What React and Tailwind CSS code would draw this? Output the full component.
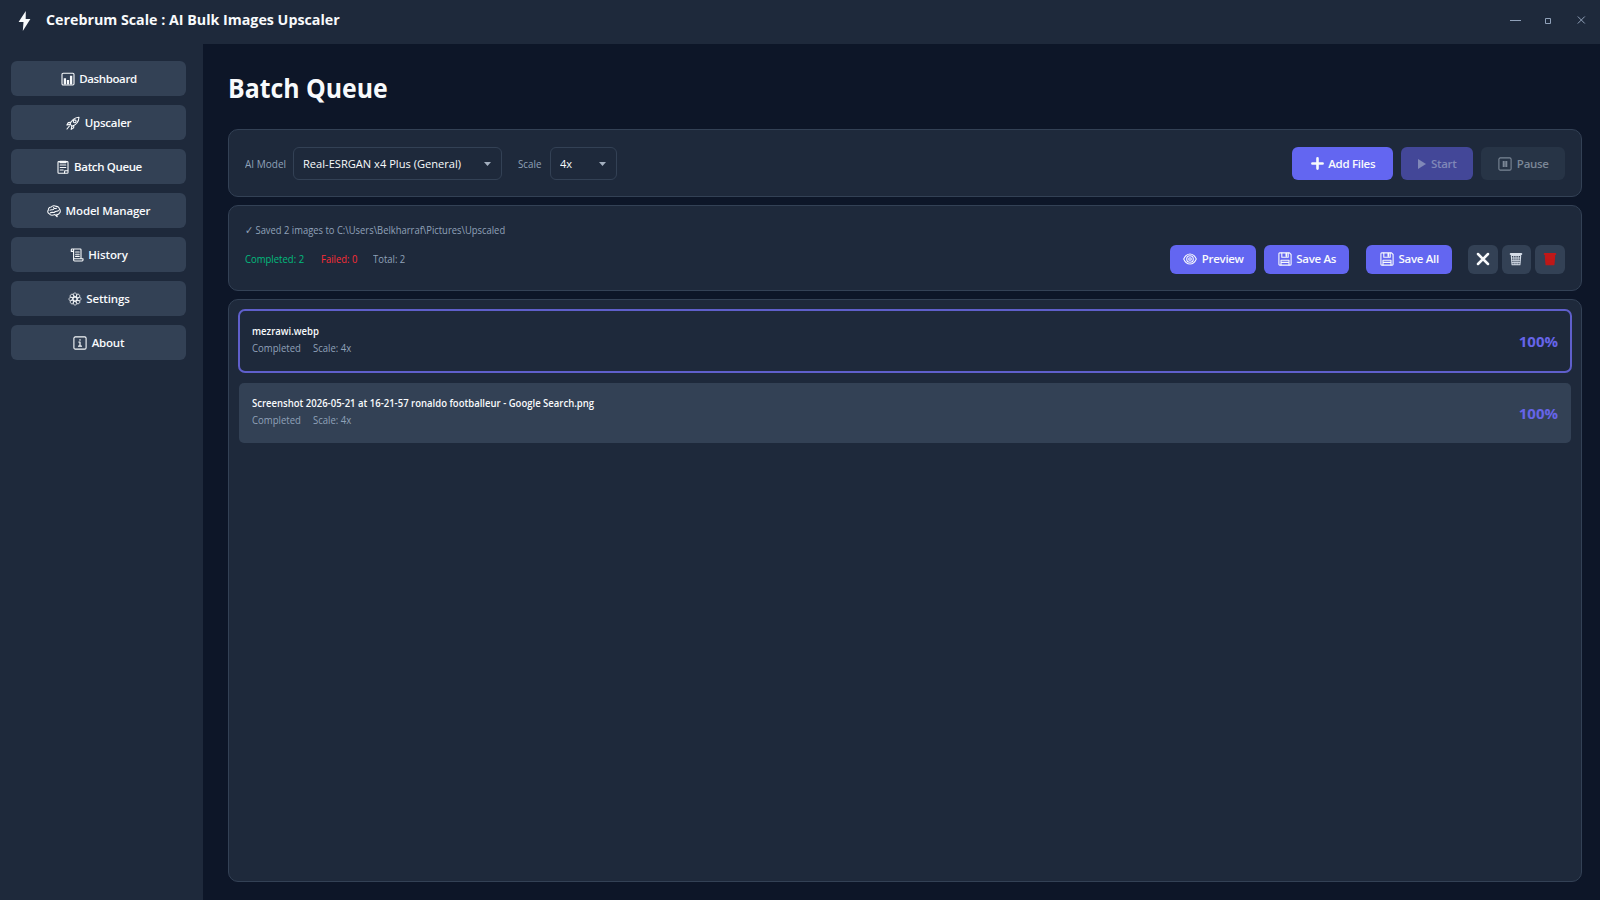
import clsx from 'clsx';

const Svg = ({ size = 14, box = 14, className, children }) => (
  <svg width={size} height={size} viewBox={`0 0 ${box} ${box}`} className={clsx('shrink-0', className)} fill="none" stroke="currentColor" strokeWidth="1.1" strokeLinecap="round" strokeLinejoin="round">
    {children}
  </svg>
);

const ChartIcon = () => (
  <Svg>
    <rect x="1" y="1.2" width="12" height="11.8" rx="1.2" />
    <path d="M3.9 12.5V6.200M7 12.5V8M10.1 12.5V3.8" strokeWidth="2.300" strokeLinecap="butt" />
  </Svg>
);

const RocketIcon = () => (
  <Svg>
    <path d="M4 8.2C5.2 4.8 8.2 1.6 13 1.2c-.3 4.600-3.400 7.800-7 9z" />
    <path d="M4.700 6.200 2.300 6.600.9 9l3.100-.6M7.800 9.600l-.2 2.300-2.400 1.500.6-3.100M3.400 10 1 13" />
    <circle cx="8.700" cy="5.300" r="1.400" />
  </Svg>
);

const ClipboardIcon = () => (
  <Svg>
    <rect x="2" y="1.600" width="10" height="11.600" rx=".8" />
    <path d="M4.200 5h5.600M4.200 7.500h5.600M4.200 10h3M8.500 13l.2-2.300h3M4 1.200h6" />
    <path d="M4.300 2.300h5.400" strokeWidth="1.800" />
  </Svg>
);

const BrainIcon = () => (
  <Svg>
    <path d="M2.300 9.800C.6 9.300.4 7.200 1.300 6.200 1.300 4 3 3 4.300 3 5.400 1.400 8 1.400 9 2.400c2-.2 3.400 1.200 3.300 2.600 1.400 1 1.300 3.500 0 4.200-.3 1.200-1.500 1.500-2.500 1.200L10.200 12.800 8 10.600C6 11.400 3.200 11.400 2.300 9.800z" />
    <path d="M3 6.200c1.300-1.200 2.400.2 3.600-.8M6.600 3.200c0 1.400 1.600 1.600 2.800 1M3.500 8.800c1.500-1.200 2.800.4 4.200-.8s2.600-.2 3.800-1.400" />
  </Svg>
);

const ScrollIcon = () => (
  <Svg>
    <path d="M3.600 3.400H1.300V1.700c0-.4.300-.7.7-.7h8.300c.4 0 .7.3.7.700V10.800M3.600 1.400v9.400M3.600 10.800H13v1.300c0 .6-.4.900-.9.900H4.500c-.6 0-.9-.4-.9-.9z" />
    <path d="M5.600 4h3.600M5.600 6.200h3.600M5.600 8.400h3.600" />
  </Svg>
);

const PETALS = [0, 45, 90, 135, 180, 225, 270, 315];

const GearIcon = () => (
  <Svg>
    <circle cx="7" cy="7" r="2.100" />
    {PETALS.map((a) => (
      <path key={a} transform={`rotate(${a} 7 7)`} d="M7 4.900 5.100 2.600C5.300.4 8.700.4 8.900 2.600z" strokeWidth=".8" />
    ))}
  </Svg>
);

const InfoIcon = () => (
  <Svg>
    <rect x=".9" y=".9" width="12.200" height="12.200" rx="1.400" />
    <path d="M5.800 6H7v4M5.500 10.200h3M7 3.500v.7" strokeWidth="1.200" />
  </Svg>
);

const PauseIcon = () => (
  <Svg>
    <rect x=".9" y=".9" width="12.200" height="12.200" rx="1.400" />
    <path d="M5.700 4v6M8.300 4v6" strokeWidth="2" strokeLinecap="butt" />
  </Svg>
);

const EyeIcon = () => (
  <Svg>
    <path d="M.7 7C2 4 4.200 2 7 2s5 2 6.300 5C12 10 9.800 12 7 12S2 10 .7 7z" />
    <circle cx="7" cy="7" r="3.300" />
    <circle cx="7" cy="7" r="1.300" />
  </Svg>
);

const SaveIcon = () => (
  <Svg>
    <path d="M1.700.9h9.800l1.600 1.600v9.800c0 .5-.3.8-.8.8H1.700c-.5 0-.8-.3-.8-.8V1.700c0-.5.3-.8.8-.8z" />
    <path d="M3.800 1v4.200h6.400V1M3 13V8.200h8V13M3 10.400h8" />
    <path d="M8.300 1.600v2.600" strokeWidth="1.600" />
  </Svg>
);

const TrashIcon = ({ solid }) => (
  <Svg>
    <path d="M1.800 2h10.400" strokeWidth="2.200" />
    <path d="M2.300 3.500h9.400L10.900 12.800H3.100z" fill={solid ? 'currentColor' : 'none'} />
    <path d="M4.700 4l.5 8.500M7 4v8.500M9.300 4l-.5 8.500M2.700 6h8.600M3 8.300h8M3.200 10.600h7.600" strokeWidth=".9" />
  </Svg>
);

const NAV = [
  { label: 'Dashboard', icon: <ChartIcon />, track: 'tracking-[-0.38px]' },
  { label: 'Upscaler', icon: <RocketIcon />, track: 'tracking-[-0.25px]' },
  { label: 'Batch Queue', icon: <ClipboardIcon />, track: 'tracking-[-0.36px]' },
  { label: 'Model Manager', icon: <BrainIcon />, track: 'tracking-[-0.15px]' },
  { label: 'History', icon: <ScrollIcon />, track: 'tracking-[-0.1px]' },
  { label: 'Settings', icon: <GearIcon />, track: 'tracking-[-0.13px]' },
  { label: 'About', icon: <InfoIcon />, track: 'tracking-[-0.2px]' },
];

const FILES = [
  { name: 'mezrawi.webp', selected: true },
  { name: 'Screenshot 2026-05-21 at 16-21-57 ronaldo footballeur - Google Search.png' },
];

function Select({ value, className }) {
  return (
    <button className={clsx('flex h-[33px] items-center justify-between rounded-[6px] border border-[#334155] pl-[9px] pr-2.5 pt-px text-[11.5px] text-slate-50', className)}>
      <span className="origin-left scale-x-[0.966] whitespace-nowrap">{value}</span>
      <svg width="7" height="4" viewBox="0 0 7 4" fill="#a3afbf"><path d="M0 0h7L3.500 4z" /></svg>
    </button>
  );
}

function Action({ icon, label, className }) {
  return (
    <button className={clsx('flex items-center justify-center gap-[4.5px] rounded-[6px] text-[11.5px] font-semibold', className)}>
      {icon}
      {label && <span className="-mr-px tracking-[-0.3px]">{label}</span>}
    </button>
  );
}

export default function App() {
  return (
    <div className="flex h-[900px] w-[1600px] flex-col overflow-hidden bg-[#0d1628] font-['Open_Sans','Noto_Sans',sans-serif] text-slate-50">
      {/* Title bar */}
      <header className="flex h-11 shrink-0 items-center justify-between bg-[#1e293b] pl-[18px] pr-[14px] pb-1">
        <div className="flex items-center gap-[15px]">
          <svg width="13" height="20" viewBox="0 0 13 20" className="mt-0.5" fill="#f8fafc"><path d="M7.800 0 .6 11h4.900L4.800 20 12.400 8H7.700z" /></svg>
          <h1 className="-mt-0.5 origin-left scale-x-[0.95] text-[15px] font-bold">Cerebrum Scale : AI Bulk Images Upscaler</h1>
        </div>
        <div className="flex items-center text-slate-400">
          <svg width="11" height="10" viewBox="0 0 11 10" stroke="currentColor"><path d="M0 5.500h11" /></svg>
          <svg width="6" height="6" viewBox="0 0 6 6" stroke="currentColor" fill="none" className="ml-[24px] mt-0.5"><path d="M.5.500h5v5h-5z" /></svg>
          <svg width="9" height="8" viewBox="0 0 9 8" stroke="currentColor" className="ml-[26px]"><path d="M.8.500l7 7M7.800.500l-7 7" /></svg>
        </div>
      </header>

      <div className="flex min-h-0 flex-1">
        {/* Sidebar */}
        <nav className="flex w-[202.500px] shrink-0 flex-col gap-[9px] bg-[#1e293b] pl-[11px] pr-[17px] pt-[17px]">
          {NAV.map((n) => (
            <button key={n.label} className="flex h-[35px] shrink-0 items-center justify-center gap-[4.5px] rounded-[6px] bg-[#334155] pl-px pt-px text-[11.5px] font-semibold">
              {n.icon}
              <span className={n.track}>{n.label}</span>
            </button>
          ))}
        </nav>

        <main className="flex min-w-0 flex-1 flex-col pb-[18px] pl-[25px] pr-[18px]">
          <h2 className="mb-[22px] mt-[25px] h-[38px] origin-left scale-x-[0.92] text-[27px] font-bold leading-[38px]">Batch Queue</h2>

          {/* Toolbar */}
          <section className="flex h-[68px] shrink-0 items-center rounded-[10px] border border-[#334155] bg-[#1e293b] px-4 pt-px">
            <span className="w-[48.5px] origin-left scale-x-[0.955] whitespace-nowrap pt-0.5 text-[10.5px] text-slate-400">AI Model</span>
            <Select value="Real-ESRGAN x4 Plus (General)" className="w-[209px]" />
            <span className="ml-4 w-[31.5px] origin-left scale-x-[0.93] pt-0.5 text-[10.5px] text-slate-400">Scale</span>
            <Select value="4x" className="w-[67px]" />
            <div className="ml-auto flex gap-2">
              <Action className="h-[33px] w-[101px] bg-[#6366f1]" label="Add Files" icon={<Svg size={13}><path d="M7 1.500v11M1.500 7h11" strokeWidth="2.800" /></Svg>} />
              <Action className="h-[33px] w-[72px] bg-[#434798] text-[#8088b8]" label="Start" icon={<svg width="8" height="10" viewBox="0 0 8 10" fill="currentColor"><path d="M0 0l8 5-8 5z" /></svg>} />
              <Action className="h-[33px] w-[84px] bg-[#273446] text-[#7b8796]" label="Pause" icon={<PauseIcon />} />
            </div>
          </section>

          {/* Status */}
          <section className="mt-2 flex h-[86px] shrink-0 flex-col rounded-[10px] border border-[#334155] bg-[#1e293b] px-4 pt-4 text-[10.5px]">
            <p className="h-4 origin-left scale-x-[0.895] leading-4 text-slate-400">✓ Saved 2 images to C:\Users\Belkharraf\Pictures\Upscaled</p>
            <div className="mt-[6px] flex h-[30px] items-center">
              <span className="w-[76px] origin-left scale-x-[0.907] pt-0.5 text-emerald-500">Completed: 2</span>
              <span className="w-[52.5px] origin-left scale-x-[0.9] pt-0.5 text-red-500">Failed: 0</span>
              <span className="origin-left scale-x-[0.9] pt-0.5 text-slate-400">Total: 2</span>
              <div className="ml-auto flex">
                <Action className="h-[29px] w-[86px] bg-[#6366f1]" label="Preview" icon={<EyeIcon />} />
                <Action className="ml-2 h-[29px] w-[85px] bg-[#6366f1]" label="Save As" icon={<SaveIcon />} />
                <Action className="ml-[17px] h-[29px] w-[86px] bg-[#6366f1]" label="Save All" icon={<SaveIcon />} />
                <Action className="ml-4 h-[29px] w-[29.500px] bg-[#334155]" icon={<Svg><path d="M2 2l10 10M12 2L2 12" strokeWidth="2.500" /></Svg>} />
                <Action className="ml-1 h-[29px] w-[29.500px] bg-[#334155] text-[#d5dde8]" icon={<TrashIcon />} />
                <Action className="ml-1 h-[29px] w-[30px] bg-[#334155] text-[#c01818]" icon={<TrashIcon solid />} />
              </div>
            </div>
          </section>

          {/* Queue */}
          <section className="mt-2 flex min-h-0 flex-1 flex-col gap-[10px] rounded-[10px] border border-[#334155] bg-[#1e293b] px-[9px] pt-[9px]">
            {FILES.map((f) => (
              <div key={f.name} className={clsx('flex shrink-0 items-center justify-between', f.selected ? 'h-[64px] rounded-[7px] border-2 border-[#5f5fcb] px-3' : 'mx-px h-[60px] rounded-[5px] bg-[#334155] px-[13px]')}>
                <div className="-mt-1">
                  <p className="origin-left scale-x-[0.907] text-[10.5px] font-semibold leading-[18px]">{f.name}</p>
                  <p className="flex text-[10.5px] leading-[17px] text-slate-400">
                    <span className="w-[61px] origin-left scale-x-[0.911]">Completed</span>
                    <span className="origin-left scale-x-[0.905]">Scale: 4x</span>
                  </p>
                </div>
                <span className="text-[15px] font-bold text-[#6664e8]">100%</span>
              </div>
            ))}
          </section>
        </main>
      </div>
    </div>
  );
}
